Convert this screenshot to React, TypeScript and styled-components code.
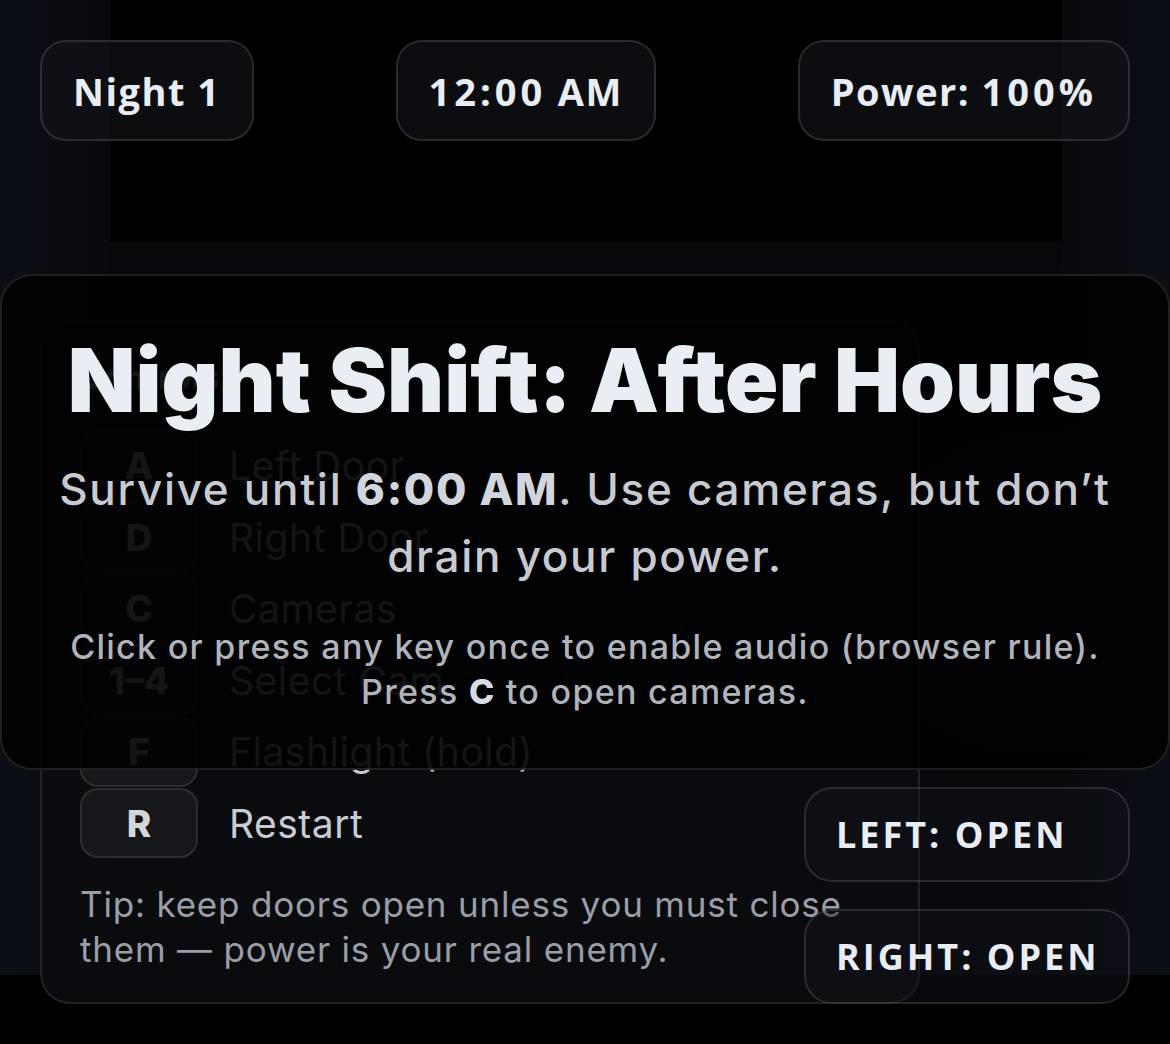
import React from "react";
import styled, { createGlobalStyle } from "styled-components";

const Global = createGlobalStyle`
  html, body { margin: 0; padding: 0; background: #000; }
  body { font-family: Inter, "Noto Sans", sans-serif; color: #e8edf3; }
  * { box-sizing: border-box; }
`;

const Stage = styled.div`
  position: relative;
  width: 1170px;
  height: 1044px;
  overflow: hidden;
  background:
    radial-gradient(circle at 88% 56%, rgba(70, 14, 24, 0.18), rgba(0, 0, 0, 0) 18%),
    linear-gradient(#000, #000) 110px 0 / 952px 242px no-repeat,
    linear-gradient(90deg, #0c0f16 0%, #07090d 100%) 0 0 / 110px 975px no-repeat,
    linear-gradient(270deg, #0c0f16 0%, #07090d 100%) right 0 top 0 / 108px 975px no-repeat,
    linear-gradient(180deg, #06070a 0%, #08090c 100%) 0 0 / 100% 975px no-repeat,
    #000;
`;

const HudLayer = styled.div`
  display: flex;
  flex-direction: column;
  height: 100%;
  padding: 40px;
`;

const TopBar = styled.div`
  display: flex;
  justify-content: space-between;
  align-items: center;
`;

const Pill = styled.div`
  display: flex;
  align-items: center;
  height: 101px;
  padding: 0 31px;
  border-radius: 26px;
  border: 2px solid rgba(255, 255, 255, 0.12);
  background: rgba(16, 18, 24, 0.72);
  font-family: "Open Sans", "Noto Sans", sans-serif;
  font-weight: 700;
  font-size: 38px;
  letter-spacing: 1.5px;
  color: #e8edf3;
  white-space: nowrap;
`;

const PillText = styled.span`
  white-space: pre;
`;

const Num = styled.span`
  letter-spacing: 4px;
`;

const BottomArea = styled.div`
  flex: 1;
  display: grid;
  grid-template-columns: 1fr;
  align-items: end;
`;

const ControlsPanel = styled.section`
  grid-area: 1 / 1;
  justify-self: start;
  align-self: end;
  width: 880px;
  padding: 36px 38px 30px;
  border-radius: 30px;
  border: 2px solid rgba(255, 255, 255, 0.1);
  background: rgba(11, 12, 16, 0.9);
`;

const PanelTitle = styled.h2`
  margin: 0 0 33px;
  font-family: Inter, sans-serif;
  font-weight: 800;
  font-size: 32px;
  line-height: 40px;
  letter-spacing: 0.5px;
  color: #dfe3e8;
`;

const KeyList = styled.div`
  display: flex;
  flex-direction: column;
  gap: 1.5px;
`;

const KeyRow = styled.div`
  display: flex;
  align-items: center;
  gap: 31px;
`;

const KeyCap = styled.div`
  display: flex;
  align-items: center;
  justify-content: center;
  width: 118px;
  height: 70px;
  border-radius: 18px;
  border: 2px solid rgba(255, 255, 255, 0.1);
  background: rgba(255, 255, 255, 0.05);
  font-family: Inter, sans-serif;
  font-weight: 800;
  font-size: 37px;
  color: #d3d7dc;
`;

const KeyLabel = styled.span`
  font-family: Inter, sans-serif;
  font-weight: 400;
  font-size: 39px;
  letter-spacing: 0.5px;
  color: #c8ccd2;
`;

const Tip = styled.p`
  margin: 24px 0 0;
  font-family: Inter, sans-serif;
  font-size: 35px;
  line-height: 45px;
  letter-spacing: 0.8px;
  color: #9a9ea6;
`;

const DoorStack = styled.div`
  grid-area: 1 / 1;
  justify-self: end;
  align-self: end;
  display: flex;
  flex-direction: column;
  gap: 27px;
`;

const DoorButton = styled.button`
  display: flex;
  align-items: center;
  width: 326px;
  height: 95px;
  padding: 0 30px;
  border-radius: 28px;
  border: 2px solid rgba(255, 255, 255, 0.12);
  background: rgba(18, 20, 26, 0.45);
  font-family: "Open Sans", "Noto Sans", sans-serif;
  font-weight: 700;
  font-size: 36px;
  letter-spacing: 3px;
  color: #e8edf3;
  white-space: nowrap;
  cursor: pointer;
`;

const Overlay = styled.div`
  position: absolute;
  inset: 0;
  display: flex;
  align-items: center;
  justify-content: center;
`;

const Card = styled.div`
  width: 1170px;
  padding: 58px 40px 54px;
  border-radius: 32px;
  border: 2px solid rgba(255, 255, 255, 0.12);
  background: rgba(1, 1, 3, 0.91);
  text-align: center;
`;

const Title = styled.h1`
  margin: 0;
  font-family: Inter, sans-serif;
  font-weight: 900;
  font-size: 88px;
  line-height: 92px;
  letter-spacing: 0px;
  color: #e9eef4;
`;

const Subtitle = styled.p`
  margin: 30px 0 0;
  font-family: Inter, sans-serif;
  font-weight: 450;
  font-size: 44px;
  line-height: 67px;
  letter-spacing: 1.7px;
  color: #c7cbd1;
  b { font-weight: 800; color: #d2d6dc; }
`;

const Note = styled.p`
  margin: 34px 0 0;
  font-family: Inter, sans-serif;
  font-weight: 450;
  font-size: 34px;
  line-height: 45px;
  letter-spacing: 1.3px;
  color: #b0b4ba;
  b { font-weight: 800; color: #d8dce1; }
`;

const keys: [string, string][] = [
  ["A", "Left Door"],
  ["D", "Right Door"],
  ["C", "Cameras"],
  ["1–4", "Select Cam"],
  ["F", "Flashlight (hold)"],
  ["R", "Restart"],
];

export default function App() {
  return (
    <>
      <Global />
      <Stage>
        <HudLayer>
          <TopBar>
            <Pill>
              <PillText>Night 1</PillText>
            </Pill>
            <Pill>
              <PillText>
                <Num>12:00</Num> AM
              </PillText>
            </Pill>
            <Pill>
              <PillText>
                Power: <Num>100%</Num>
              </PillText>
            </Pill>
          </TopBar>
          <BottomArea>
            <ControlsPanel>
              <PanelTitle>Controls</PanelTitle>
              <KeyList>
                {keys.map(([k, label]) => (
                  <KeyRow key={k}>
                    <KeyCap>{k}</KeyCap>
                    <KeyLabel>{label}</KeyLabel>
                  </KeyRow>
                ))}
              </KeyList>
              <Tip>
                Tip: keep doors open unless you must close
                <br />
                them — power is your real enemy.
              </Tip>
            </ControlsPanel>
            <DoorStack>
              <DoorButton>LEFT: OPEN</DoorButton>
              <DoorButton>RIGHT: OPEN</DoorButton>
            </DoorStack>
          </BottomArea>
        </HudLayer>
        <Overlay>
          <Card>
            <Title>Night Shift: After Hours</Title>
            <Subtitle>
              Survive until <b>6:00 AM</b>. Use cameras, but don’t drain your power.
            </Subtitle>
            <Note>
              Click or press any key once to enable audio (browser rule). Press <b>C</b> to open
              cameras.
            </Note>
          </Card>
        </Overlay>
      </Stage>
    </>
  );
}
